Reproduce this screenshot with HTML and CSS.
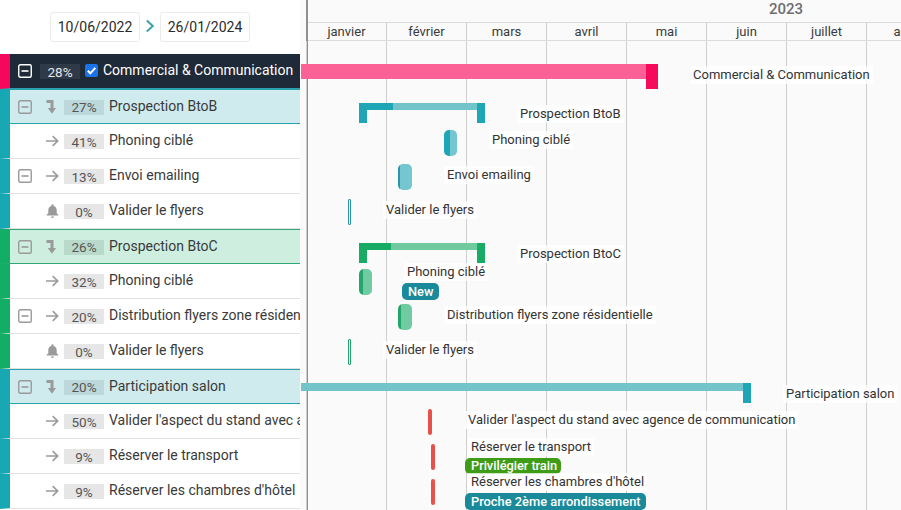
FILE: index.html
```html
<!DOCTYPE html>
<html lang="fr">
<head>
<meta charset="utf-8">
<title>Gantt</title>
<link rel="stylesheet" href="styles.css">
</head>
<body>
<svg class="defs" width="0" height="0" aria-hidden="true">
  <symbol id="minus" viewBox="0 0 14 14"><rect x="0.75" y="0.75" width="12.5" height="12.5" rx="1.5" fill="none" stroke="currentColor" stroke-width="1.4"/><rect x="3.5" y="6.2" width="7" height="1.6" fill="currentColor"/></symbol>
  <symbol id="arrow" viewBox="0 0 12 12"><path d="M0 6H10.5M6.2 1.5L10.8 6L6.2 10.5" fill="none" stroke="currentColor" stroke-width="1.5"/></symbol>
  <symbol id="bend" viewBox="0 0 10 14"><path d="M0.5 1.500H6V9" fill="none" stroke="currentColor" stroke-width="3"/><path d="M1.800 8L6 13.800L10 8Z" fill="currentColor"/></symbol>
  <symbol id="bell" viewBox="0 0 13 14"><path d="M6.5 0.3c.7 0 1.1.5 1.1 1.1v.5c2 .5 3.1 2.2 3.1 4.2v3.1l1.6 1.6v.7H.7v-.7l1.6-1.6V6.1c0-2 1.1-3.7 3.1-4.2v-.5c0-.6.4-1.1 1.1-1.1zM5 12.4h3c0 .9-.7 1.5-1.5 1.5S5 13.300 5 12.400z" fill="currentColor"/></symbol>
</svg>
<main class="app">
  <section class="left">
    <div class="dates">
      <span class="date">10/06/2022</span>
      <svg class="chev" width="10" height="14" viewBox="0 0 10 14"><path d="M1.800 1.500L7.800 7L1.800 12.500" fill="none" stroke="currentColor" stroke-width="2"/></svg>
      <span class="date">26/01/2024</span>
    </div>
    <div class="rows">
      <div class="row root pink">
        <svg class="box"><use href="#minus"/></svg>
        <span class="pct">28%</span>
        <span class="check"><svg width="13" height="13" viewBox="0 0 13 13"><path d="M2.800 6.800L5.300 9.300L10.300 3.800" fill="none" stroke="#fff" stroke-width="2"/></svg></span>
        <span class="name">Commercial &amp; Communication</span>
      </div>
      <div class="row group teal">
        <svg class="box"><use href="#minus"/></svg>
        <svg class="ic bend"><use href="#bend"/></svg>
        <span class="pct">27%</span><span class="name">Prospection BtoB</span>
      </div>
      <div class="row teal">
        <span class="nobox"></span>
        <svg class="ic"><use href="#arrow"/></svg>
        <span class="pct">41%</span><span class="name">Phoning ciblé</span>
      </div>
      <div class="row teal">
        <svg class="box"><use href="#minus"/></svg>
        <svg class="ic"><use href="#arrow"/></svg>
        <span class="pct">13%</span><span class="name">Envoi emailing</span>
      </div>
      <div class="row teal">
        <span class="nobox"></span>
        <svg class="ic"><use href="#bell"/></svg>
        <span class="pct">0%</span><span class="name">Valider le flyers</span>
      </div>
      <div class="row group green">
        <svg class="box"><use href="#minus"/></svg>
        <svg class="ic bend"><use href="#bend"/></svg>
        <span class="pct">26%</span><span class="name">Prospection BtoC</span>
      </div>
      <div class="row green">
        <span class="nobox"></span>
        <svg class="ic"><use href="#arrow"/></svg>
        <span class="pct">32%</span><span class="name">Phoning ciblé</span>
      </div>
      <div class="row green">
        <svg class="box"><use href="#minus"/></svg>
        <svg class="ic"><use href="#arrow"/></svg>
        <span class="pct">20%</span><span class="name">Distribution flyers zone résidentielle</span>
      </div>
      <div class="row green">
        <span class="nobox"></span>
        <svg class="ic"><use href="#bell"/></svg>
        <span class="pct">0%</span><span class="name">Valider le flyers</span>
      </div>
      <div class="row group teal">
        <svg class="box"><use href="#minus"/></svg>
        <svg class="ic bend"><use href="#bend"/></svg>
        <span class="pct">20%</span><span class="name">Participation salon</span>
      </div>
      <div class="row teal">
        <span class="nobox"></span>
        <svg class="ic"><use href="#arrow"/></svg>
        <span class="pct">50%</span><span class="name">Valider l'aspect du stand avec agence de communication</span>
      </div>
      <div class="row teal">
        <span class="nobox"></span>
        <svg class="ic"><use href="#arrow"/></svg>
        <span class="pct">9%</span><span class="name">Réserver le transport</span>
      </div>
      <div class="row teal">
        <span class="nobox"></span>
        <svg class="ic"><use href="#arrow"/></svg>
        <span class="pct">9%</span><span class="name">Réserver les chambres d'hôtel</span>
      </div>
    </div>
  </section>
  <section class="chart">
    <header class="head">
      <div class="year">2023</div>
      <div class="months">
        <span>janvier</span><span>février</span><span>mars</span><span>avril</span><span>mai</span><span>juin</span><span>juillet</span><span>août</span>
      </div>
    </header>
    <div class="canvas">
      <div class="line" style="left:1px;top:23px;width:345px;height:15px;--c:#fb6194"></div>
      <div class="cap" style="left:346px;top:23px;width:12px;height:25px;--c:#f50a5c"></div>
      <span class="lbl" style="left:393px;top:25px">Commercial &amp; Communication</span>

      <div class="line" style="left:59px;top:62px;width:126px;height:7px;--c:#73c3ca"></div>
      <div class="cap" style="left:59px;top:62px;width:34px;height:7px;--c:#1fa6b4"></div>
      <div class="cap" style="left:59px;top:62px;width:8px;height:20px;--c:#1fa6b4"></div>
      <div class="cap" style="left:177px;top:62px;width:8px;height:20px;--c:#1fa6b4"></div>
      <span class="lbl" style="left:220px;top:64px">Prospection BtoB</span>

      <div class="task" style="left:144px;top:89px;width:13px;--c:#74c6d1;--p:#1fa6b4;--w:6px"></div>
      <span class="lbl" style="left:192px;top:90px">Phoning ciblé</span>

      <div class="task" style="left:98px;top:123px;width:14px;--c:#74c6d1;--p:#2a97a8;--w:2px"></div>
      <span class="lbl" style="left:147px;top:125px">Envoi emailing</span>

      <div class="mile" style="left:48px;top:158px;--c:#2a97a8"></div>
      <span class="lbl" style="left:86px;top:160px">Valider le flyers</span>

      <div class="line" style="left:59px;top:202px;width:126px;height:7px;--c:#71c99f"></div>
      <div class="cap" style="left:59px;top:202px;width:32px;height:7px;--c:#17ab66"></div>
      <div class="cap" style="left:59px;top:202px;width:8px;height:20px;--c:#17ab66"></div>
      <div class="cap" style="left:177px;top:202px;width:8px;height:20px;--c:#17ab66"></div>
      <span class="lbl" style="left:220px;top:204px">Prospection BtoC</span>

      <div class="task" style="left:59px;top:228px;width:13px;--c:#71cba2;--p:#23a56c;--w:4px"></div>
      <span class="lbl" style="left:107px;top:222px">Phoning ciblé</span>
      <span class="tag tag-teal" style="left:102px;top:242px">New</span>

      <div class="task" style="left:98px;top:263px;width:14px;--c:#71cba2;--p:#23a56c;--w:3px"></div>
      <span class="lbl" style="left:147px;top:265px">Distribution flyers zone résidentielle</span>

      <div class="mile" style="left:48px;top:298px;--c:#23a56c"></div>
      <span class="lbl" style="left:86px;top:300px">Valider le flyers</span>

      <div class="line" style="left:1px;top:342px;width:442px;height:8px;--c:#73c3ca"></div>
      <div class="cap" style="left:443px;top:342px;width:8px;height:20px;--c:#1fa6b4"></div>
      <span class="lbl" style="left:486px;top:344px">Participation salon</span>

      <div class="crit" style="left:128px;top:368px"></div>
      <span class="lbl" style="left:168px;top:370px">Valider l'aspect du stand avec agence de communication</span>

      <div class="crit" style="left:131px;top:403px"></div>
      <span class="lbl" style="left:171px;top:397px">Réserver le transport</span>
      <span class="tag tag-green" style="left:165px;top:417px">Privilégier train</span>

      <div class="crit" style="left:131px;top:438px"></div>
      <span class="lbl" style="left:171px;top:432px">Réserver les chambres d'hôtel</span>
      <span class="tag tag-teal" style="left:165px;top:452px">Proche 2ème arrondissement</span>
    </div>
  </section>
</main>
</body>
</html>
```

FILE: styles.css
```css
* { box-sizing: border-box; }
html, body { margin: 0; height: 100%; overflow: hidden; background: #fff; }
body { font-family: Roboto, sans-serif; font-size: 14px; color: #333; }
.defs { position: absolute; }
.app { display: flex; height: 510px; }

.left { width: 300px; flex: none; background: #fff; }
.dates { height: 54px; padding: 12px 0 0 50px; display: flex; align-items: flex-start; gap: 5px; }
.date { width: 90px; height: 30px; border: 1px solid #ebebeb; border-radius: 3px; display: flex; align-items: center; justify-content: center; font-size: 14px; color: #2b2b2b; }
.chev { margin-top: 7px; color: #3aa5a8; }

.rows { display: flex; flex-direction: column; }
.row { height: 35px; display: flex; align-items: center; padding-left: 8px; border-left: 10px solid var(--strip); border-bottom: 1px solid #e2e2e2; color: #3a3a3a; white-space: nowrap; overflow: hidden; }
.teal { --strip: #17a8b4; --tint: #d0ebee; --edge: #2aa1ad; }
.green { --strip: #12ae66; --tint: #ceeee0; --edge: #2fa876; }
.pink { --strip: #f6075e; }

.box { width: 14px; height: 14px; color: #9a9a9a; flex: none; }
.nobox { width: 14px; flex: none; }
.ic { width: 13px; height: 14px; margin-left: 14px; flex: none; color: #9a9a9a; }
.ic.bend { width: 10px; margin: 0 3px 0 14px; }
.pct { width: 40px; height: 15px; margin-left: 5px; margin-top: 1px; background: #e6e6e6; flex: none; display: flex; align-items: center; justify-content: center; font-size: 13.500px; color: #555; }
.name { margin-left: 5px; font-size: 14px; line-height: 16px; margin-top: -2px; }

.group { background: var(--tint); border-top: 1px solid var(--edge); border-bottom: 1px solid var(--edge); }
.group .pct { background: #bcd8da; }
.green.group .pct { background: #b9d9cb; }

.root { background: #1f2a38; border-bottom: 1px solid #2aa1ad; color: #fff; }
.root .box { color: #fff; }
.root .pct { margin-left: 8px; background: #2f3a48; color: #e8e8e8; }
.check { width: 13px; height: 13px; margin-left: 5px; background: #1a73e8; border-radius: 2px; flex: none; display: flex; margin-top: -1px; }
.root .name { color: #fff; }

.chart { flex: 1; min-width: 0; background: #fafafa; padding-left: 6px; position: relative; display: flex; flex-direction: column; overflow: hidden; }
.chart::before { content: ""; position: absolute; left: 6px; top: 0; bottom: 0; width: 1.500px; background: #8f8f8f; }
.head { height: 41px; flex: none; }
.year { height: 23px; border-bottom: 1px solid #dcdcdc; text-align: center; font-size: 15px; font-weight: 500; color: #6e6e6e; line-height: 19px; width: 960px; }
.months { display: flex; height: 18px; border-bottom: 1px solid #dcdcdc; margin-left: 1px; width: 640px; }
.months span { width: 80px; flex: none; text-align: center; font-size: 13px; line-height: 17px; color: #3a3a3a; border-right: 1px solid #cfcfcf; }
.canvas { flex: 1; margin-left: -6px; position: relative; overflow: hidden; }
.canvas::before { content: ""; position: absolute; inset: 0 0 0 6px; background-image: linear-gradient(90deg, #cfcfcf 1px, transparent 1px); background-size: 80px 100%; background-position: 80px 0; }

.line, .cap, .task, .mile, .crit { position: absolute; }
.line, .cap { background: var(--c); }
.task { height: 26px; border-radius: 5px; background: linear-gradient(90deg, var(--p) var(--w), var(--c) var(--w)); }
.mile { width: 3px; height: 26px; border: 1px solid var(--c); border-radius: 1px; background: #fff; }
.crit { width: 4px; height: 26px; border-radius: 2px; background: #e8504a; }
.lbl { position: absolute; font-size: 13px; line-height: 18px; padding: 0 3px; margin-left: -3px; color: #333; background: rgba(255,255,255,.75); white-space: nowrap; }
.tag { position: absolute; font-size: 12.850px; font-weight: 500; line-height: 17px; height: 17px; padding: 0 5px 0 6px; border-radius: 5px; color: #fff; white-space: nowrap; }
.tag-teal { background: #1a8a9a; }
.tag-green { background: #3f9c17; height: 16px; line-height: 16px; padding-right: 4px; letter-spacing: -.05px; }
```
